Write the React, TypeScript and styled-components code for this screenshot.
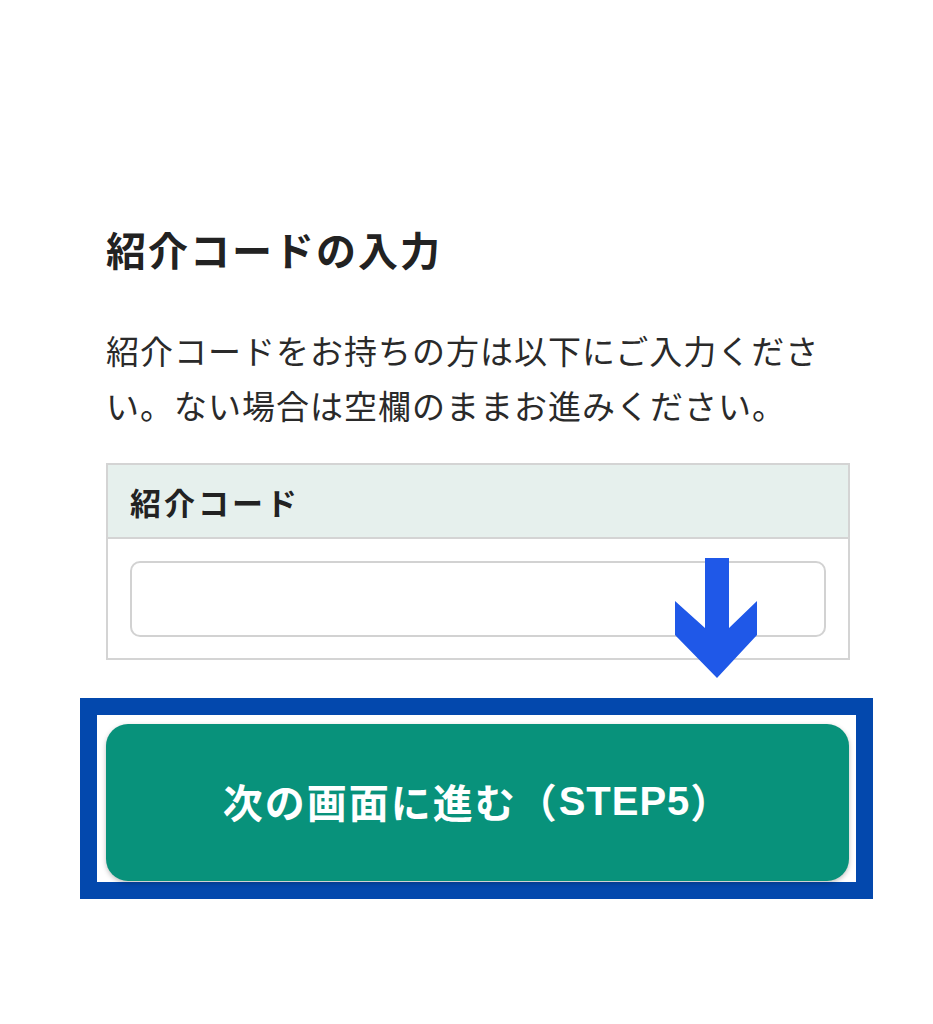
import React from 'react'
import styled, { createGlobalStyle } from 'styled-components'

const GlobalStyle = createGlobalStyle`
  html, body {
    margin: 0;
    padding: 0;
    background: #fff;
  }
  body {
    font-family: 'Noto Sans CJK JP', 'Noto Sans', sans-serif;
    color: #222;
  }
`

const Page = styled.main`
  width: 933px;
  min-height: 1024px;
  box-sizing: border-box;
  padding: 219px 83px 0 106px;
`

const Title = styled.h2`
  margin: 0;
  font-size: 40px;
  line-height: 60px;
  font-weight: 700;
  letter-spacing: 2px;
`

const Lead = styled.p`
  margin: 44px 0 0;
  font-size: 33px;
  line-height: 55px;
  letter-spacing: 1px;
  font-weight: 400;
  color: #2a2a2a;
`

const FieldTable = styled.section`
  margin-top: 30px;
  border: 2px solid #d4d4d4;
  position: relative;
`

const FieldHead = styled.div`
  background: #e6f0ed;
  height: 72px;
  display: flex;
  align-items: center;
  padding-left: 22px;
  border-bottom: 2px solid #d4d4d4;
  font-size: 31px;
  font-weight: 700;
  letter-spacing: 3px;
`

const FieldBody = styled.div`
  padding: 22px 22px 21px;
  background: #fff;
`

const CodeInput = styled.input`
  display: block;
  width: 100%;
  box-sizing: border-box;
  height: 76px;
  border: 2px solid #d2d2d2;
  border-radius: 10px;
  background: #fff;
  font-size: 28px;
  padding: 0 16px;
  outline: none;
`

// annotation arrow pointing at the button
const Pointer = styled.svg`
  position: absolute;
  left: 567px;
  top: 93px;
`

const Highlight = styled.div`
  margin: 38px -23px 0 -26px;
  border: 17px solid #0348ad;
  padding: 9px 7px 1px 9px;
  background: #fff;
`

const NextButton = styled.button`
  display: flex;
  width: 100%;
  height: 157px;
  align-items: center;
  justify-content: center;
  padding-bottom: 4px;
  border: none;
  border-radius: 22px;
  background: #08927b;
  color: #fff;
  font-family: 'Noto Sans CJK JP', 'Noto Sans', sans-serif;
  font-size: 40px;
  font-weight: 700;
  letter-spacing: 2px;
  box-shadow: 0 2px 5px rgba(0, 0, 0, 0.25);
  cursor: pointer;
`

const Step = styled.span`
  font-family: 'Liberation Sans', Arial, sans-serif;
  font-size: 40px;
  font-weight: 700;
  letter-spacing: 1px;
`

export default function App() {
  return (
    <>
      <GlobalStyle />
      <Page>
        <Title>紹介コードの入力</Title>
        <Lead>
          紹介コードをお持ちの方は以下にご入力ください。ない場合は空欄のままお進みください。
        </Lead>
        <FieldTable>
          <FieldHead>紹介コード</FieldHead>
          <FieldBody>
            <CodeInput type="text" aria-label="紹介コード" />
          </FieldBody>
          <Pointer width="84" height="121" viewBox="0 0 84 121" aria-hidden="true">
            <path
              d="M30 0 H54 V70 L82 43 V77 L42 120 L0 77 V43 L30 70 Z"
              fill="#1f58e8"
            />
          </Pointer>
        </FieldTable>
        <Highlight>
          <NextButton type="button">
            次の画面に進む（<Step>STEP5</Step>）
          </NextButton>
        </Highlight>
      </Page>
    </>
  )
}
